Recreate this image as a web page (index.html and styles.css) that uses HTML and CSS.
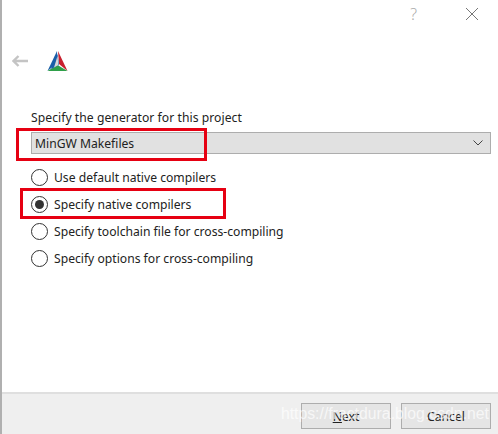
FILE: index.html
```html
<!DOCTYPE html>
<html lang="en">
<head>
  <meta charset="UTF-8" />
  <title>CMake Setup</title>
  <link rel="stylesheet" href="styles.css">
</head>
<body>

<div class="dialog">
  <div class="titlebar">
    <span class="help">?</span>
    <svg class="close" width="14" height="14" viewBox="0 0 14 14"><path d="M1 1L13 13M13 1L1 13" stroke="#777" stroke-width="1" fill="none"/></svg>
  </div>

  <div class="header">
    <svg class="back" width="18" height="12" viewBox="0 0 18 12"><path d="M16 6H2M6.500 1L1.500 6L6.500 11" stroke="#c4c4c4" stroke-width="2.400" fill="none"/></svg>
    <svg class="logo" width="21" height="21" viewBox="0 0 21 21">
      <polygon points="10,0 10.500,12 0.500,20" fill="#1a5ea8"/>
      <polygon points="11,0 20.500,20 12,13" fill="#c8202f"/>
      <polygon points="0.500,20 10.500,14 20.500,20" fill="#2fa04a"/>
      <polygon points="10.500,3 12,14 4,18" fill="#1a5ea8"/>
      <polygon points="10.500,5 11.500,14 7,16.500" fill="#d9d9d9"/>
    </svg>
  </div>

  <div class="content">
    <div class="prompt">Specify the generator for this project</div>
    <div class="combo">
      <span>MinGW Makefiles</span>
      <svg width="10" height="6" viewBox="0 0 10 6"><path d="M0.500 0.500L5 5L9.500 0.500" stroke="#444" stroke-width="1" fill="none"/></svg>
    </div>
    <div class="options">
      <div class="option"><span class="radio"></span>Use default native compilers</div>
      <div class="option"><span class="radio checked"></span>Specify native compilers</div>
      <div class="option"><span class="radio"></span>Specify toolchain file for cross-compiling</div>
      <div class="option"><span class="radio"></span>Specify options for cross-compiling</div>
    </div>
  </div>

  <div class="footer">
    <div class="btn"><span><u>N</u>ext</span></div>
    <div class="btn">Cancel</div>
    <div class="watermark">https://fractdura.blog.csdn.net</div>
  </div>

  <div class="mark mark-combo"></div>
  <div class="mark mark-radio"></div>
</div>

</body>
</html>
```

FILE: styles.css
```css
html, body {
  margin: 0;
  padding: 0;
}

body {
  font-family: "Noto Sans", "Open Sans", sans-serif;
  font-size: 12.15px;
  color: #222;
  background: #fff;
}

.dialog {
  position: relative;
  width: 498px;
  height: 434px;
  box-sizing: border-box;
  border-left: 2px solid #b0b0b0;
  display: flex;
  flex-direction: column;
  overflow: hidden;
}

.titlebar {
  height: 28px;
  display: flex;
  align-items: center;
  justify-content: flex-end;
  gap: 48px;
  padding-right: 19px;
}

.help {
  font-size: 16px;
  font-weight: 300;
  line-height: 16px;
  color: #aaa;
}

.header {
  height: 66px;
  display: flex;
  align-items: center;
  padding-left: 10px;
  gap: 17px;
}

.content {
  flex: 1;
  padding: 7px 7px 0 29px;
}

.prompt {
  height: 31px;
  line-height: 33px;
  letter-spacing: 0.05px;
}

.combo {
  height: 22px;
  box-sizing: border-box;
  border: 1px solid #adadad;
  background: #e1e1e1;
  display: flex;
  align-items: center;
  justify-content: space-between;
  padding: 0 7px 0 3px;
}

.options {
  padding-top: 10px;
}

.option {
  height: 27px;
  display: flex;
  align-items: center;
  gap: 6px;
}

.radio {
  width: 15px;
  height: 15px;
  border: 1px solid #333;
  border-radius: 50%;
  background: #fff;
  display: flex;
  align-items: center;
  justify-content: center;
}

.radio.checked::after {
  content: "";
  width: 9px;
  height: 9px;
  border-radius: 50%;
  background: #333;
}

.footer {
  position: relative;
  height: 42px;
  box-sizing: border-box;
  border-top: 2px solid #dfdfdf;
  background: #efefef;
  display: flex;
  justify-content: flex-end;
  align-items: flex-start;
  gap: 10px;
  padding: 9px 7px 0 0;
}

.btn {
  width: 90px;
  height: 26px;
  box-sizing: border-box;
  border: 1px solid #adadad;
  background: #e5e5e5;
  display: flex;
  align-items: center;
  justify-content: center;
}

.watermark {
  position: absolute;
  right: 9px;
  top: 11px;
  font-family: "Liberation Sans", sans-serif;
  font-size: 15.800px;
  color: rgba(255, 255, 255, 0.7);
  white-space: nowrap;
}

.mark {
  position: absolute;
  box-sizing: border-box;
  border: 3px solid #e60012;
}

.mark-combo {
  left: 14px;
  top: 128px;
  width: 191px;
  height: 33px;
}

.mark-radio {
  left: 18px;
  top: 188px;
  width: 206px;
  height: 31px;
}
```
